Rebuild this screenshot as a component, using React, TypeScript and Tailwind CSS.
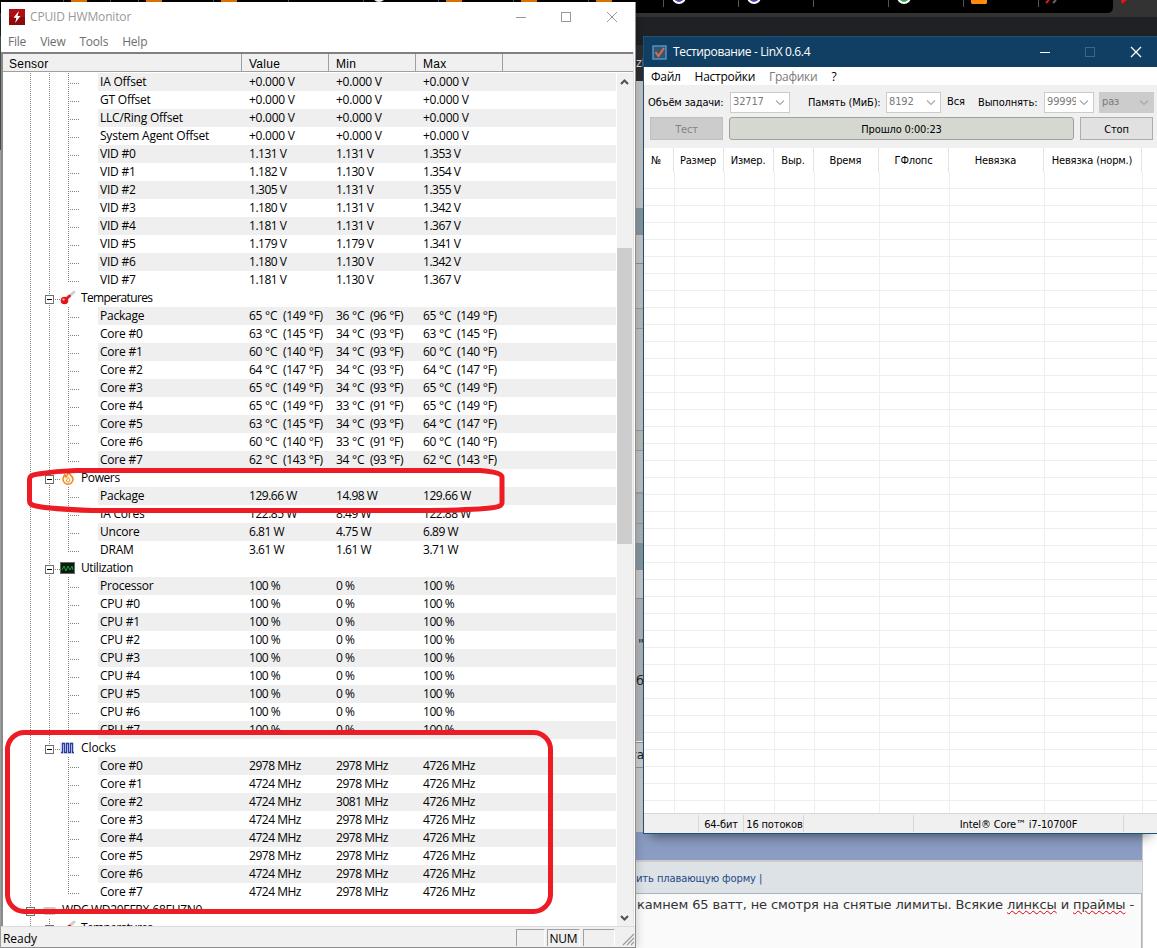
import { clsx } from "clsx";

type Row = [name: string, value: string, min: string, max: string];
type IconKind = "temp" | "power" | "util" | "clock" | "disk";
type Group = { title: string; icon: IconKind; rows: Row[] };

const VOLTAGES: Row[] = [
  ["IA Offset", "+0.000 V", "+0.000 V", "+0.000 V"],
  ["GT Offset", "+0.000 V", "+0.000 V", "+0.000 V"],
  ["LLC/Ring Offset", "+0.000 V", "+0.000 V", "+0.000 V"],
  ["System Agent Offset", "+0.000 V", "+0.000 V", "+0.000 V"],
  ["VID #0", "1.131 V", "1.131 V", "1.353 V"],
  ["VID #1", "1.182 V", "1.130 V", "1.354 V"],
  ["VID #2", "1.305 V", "1.131 V", "1.355 V"],
  ["VID #3", "1.180 V", "1.131 V", "1.342 V"],
  ["VID #4", "1.181 V", "1.131 V", "1.367 V"],
  ["VID #5", "1.179 V", "1.179 V", "1.341 V"],
  ["VID #6", "1.180 V", "1.130 V", "1.342 V"],
  ["VID #7", "1.181 V", "1.130 V", "1.367 V"],
];

const GROUPS: Group[] = [
  {
    title: "Temperatures",
    icon: "temp",
    rows: [
      ["Package", "65 °C  (149 °F)", "36 °C  (96 °F)", "65 °C  (149 °F)"],
      ["Core #0", "63 °C  (145 °F)", "34 °C  (93 °F)", "63 °C  (145 °F)"],
      ["Core #1", "60 °C  (140 °F)", "34 °C  (93 °F)", "60 °C  (140 °F)"],
      ["Core #2", "64 °C  (147 °F)", "34 °C  (93 °F)", "64 °C  (147 °F)"],
      ["Core #3", "65 °C  (149 °F)", "34 °C  (93 °F)", "65 °C  (149 °F)"],
      ["Core #4", "65 °C  (149 °F)", "33 °C  (91 °F)", "65 °C  (149 °F)"],
      ["Core #5", "63 °C  (145 °F)", "34 °C  (93 °F)", "64 °C  (147 °F)"],
      ["Core #6", "60 °C  (140 °F)", "33 °C  (91 °F)", "60 °C  (140 °F)"],
      ["Core #7", "62 °C  (143 °F)", "34 °C  (93 °F)", "62 °C  (143 °F)"],
    ],
  },
  {
    title: "Powers",
    icon: "power",
    rows: [
      ["Package", "129.66 W", "14.98 W", "129.66 W"],
      ["IA Cores", "122.85 W", "8.49 W", "122.88 W"],
      ["Uncore", "6.81 W", "4.75 W", "6.89 W"],
      ["DRAM", "3.61 W", "1.61 W", "3.71 W"],
    ],
  },
  {
    title: "Utilization",
    icon: "util",
    rows: [
      ["Processor", "100 %", "0 %", "100 %"],
      ["CPU #0", "100 %", "0 %", "100 %"],
      ["CPU #1", "100 %", "0 %", "100 %"],
      ["CPU #2", "100 %", "0 %", "100 %"],
      ["CPU #3", "100 %", "0 %", "100 %"],
      ["CPU #4", "100 %", "0 %", "100 %"],
      ["CPU #5", "100 %", "0 %", "100 %"],
      ["CPU #6", "100 %", "0 %", "100 %"],
      ["CPU #7", "100 %", "0 %", "100 %"],
    ],
  },
  {
    title: "Clocks",
    icon: "clock",
    rows: [
      ["Core #0", "2978 MHz", "2978 MHz", "4726 MHz"],
      ["Core #1", "4724 MHz", "2978 MHz", "4726 MHz"],
      ["Core #2", "4724 MHz", "3081 MHz", "4726 MHz"],
      ["Core #3", "4724 MHz", "2978 MHz", "4726 MHz"],
      ["Core #4", "4724 MHz", "2978 MHz", "4726 MHz"],
      ["Core #5", "2978 MHz", "2978 MHz", "4726 MHz"],
      ["Core #6", "4724 MHz", "2978 MHz", "4726 MHz"],
      ["Core #7", "4724 MHz", "2978 MHz", "4726 MHz"],
    ],
  },
];

// Dotted connector, one pixel on, one pixel off
function Dots({ d }: { d: string }) {
  return <path d={d} fill="none" stroke="#808080" strokeDasharray="1 1" />;
}

function Minus({ x }: { x: number }) {
  return (
    <>
      <rect x={x - 4} y="6.5" width="8" height="8" fill="#fff" stroke="#6e6e6e" />
      <path d={`M${x - 2.5} 10.5h5`} stroke="#000" />
    </>
  );
}

function NodeIcon({ kind }: { kind: IconKind }) {
  switch (kind) {
    case "temp":
      return (
        <g>
          <path d="M8 8.500L14 3" stroke="#cfcfcf" strokeWidth="3" strokeLinecap="round" />
          <path d="M5 11L9.500 7" stroke="#ea1c24" strokeWidth="3" strokeLinecap="round" />
          <circle cx="4.5" cy="11.5" r="3.8" fill="#e3131c" />
          <circle cx="3.5" cy="10.5" r="1.2" fill="#ff9a9a" />
        </g>
      );
    case "power":
      return (
        <g fill="none" stroke="#f08a1d">
          <path d="M8 2.5C8.5 5 13 6.5 13 10.3A5 5 0 0 1 3 10.3C3 8 4 7 4.7 5.8L6 8C7.5 6 8 4.500 8 2.5Z" fill="#fff3df" strokeWidth="1.5" />
          <path d="M8 8.5C9.5 10 9.8 10.8 9.5 12A1.600 1.600 0 0 1 6.500 12C6.400 10.800 7.5 10 8 8.5Z" fill="#fff" />
        </g>
      );
    case "util":
      return (
        <g>
          <rect x="0.5" y="3.5" width="14" height="11" fill="#0c1a0f" stroke="#676d68" />
          <path d="M2 11l2-4 2 5 2-5 2 4 2-4 1 4" fill="none" stroke="#12a236" />
        </g>
      );
    case "clock":
      return (
        <g>
          <rect y="3" width="14" height="12" fill="#e8eaff" />
          <path d="M1 13.5h1.5v-9h2v9h2v-9h2v9h2v-9h2v9H14" fill="none" stroke="#2b3a9c" strokeWidth="1.3" />
        </g>
      );
    case "disk":
      return <rect x="1" y="6" width="13" height="8" rx="2" fill="#c9c9c9" />;
  }
}

function Reading({ text, className }: { text: string; className?: string }) {
  const wide = text.includes("°") || text.startsWith("+");
  return <span className={clsx(wide ? "tracking-[-0.27px]" : "tracking-[-0.48px]", className)}>{text}</span>;
}

function LeafRow({ row, odd, last, inner = true }: { row: Row; odd: boolean; last: boolean; inner?: boolean }) {
  return (
    <div className="flex h-[18px] shrink-0">
      <svg className="h-[18px] w-[95px] shrink-0">
        <Dots d="M27.5 0V18" />
        {inner && <Dots d="M46.5 0V18" />}
        <Dots d={last ? "M65.5 0V10" : "M65.5 0V18"} />
        <Dots d="M65 10.5H76" />
      </svg>
      <div className={clsx("flex min-w-0 flex-1 whitespace-pre pl-0.5 leading-[18px]", odd ? "bg-[#efefef]" : "bg-white")}>
        <span className="w-[149px] shrink-0">{row[0]}</span>
        <Reading text={row[1]} className="w-[87px] shrink-0" />
        <Reading text={row[2]} className="w-[87px] shrink-0" />
        <Reading text={row[3]} />
      </div>
    </div>
  );
}

function GroupRow({ title, icon, last }: { title: string; icon: IconKind; last?: boolean }) {
  return (
    <div className="flex h-[18px] shrink-0 leading-[18px]">
      <svg className="h-[18px] w-[78px] shrink-0">
        <Dots d="M27.5 0V18" />
        <Dots d={last ? "M46.5 0V8" : "M46.5 0V18"} />
        <Dots d="M52 10.5H58" />
        <Minus x={46.5} />
        <g transform="translate(57 0)">
          <NodeIcon kind={icon} />
        </g>
      </svg>
      <span className={clsx(icon === "clock" ? "tracking-[-0.1px]" : icon === "temp" ? "tracking-[-0.65px]" : "tracking-[-0.4px]")}>{title}</span>
    </div>
  );
}

function SensorTree() {
  return (
    <div className="flex min-w-0 flex-1 flex-col overflow-hidden">
      {VOLTAGES.map((row, i) => (
        <LeafRow key={row[0]} row={row} odd={i % 2 === 0} last={i === VOLTAGES.length - 1} />
      ))}
      {GROUPS.map((g) => {
        const lastGroup = g.title === "Clocks";
        return (
          <div key={g.title} className="flex flex-col">
            <GroupRow title={g.title} icon={g.icon} last={lastGroup} />
            {g.rows.map((row, i) => (
              <LeafRow key={row[0]} row={row} odd={i % 2 === 0} last={i === g.rows.length - 1} inner={!lastGroup} />
            ))}
          </div>
        );
      })}
      <div className="flex h-[18px] shrink-0 leading-[18px]">
        <svg className="h-[18px] w-[59px] shrink-0">
          <Dots d="M27.5 0V18" />
          <Minus x={27.5} />
          <g transform="translate(39 0)">
            <NodeIcon kind="disk" />
          </g>
        </svg>
        <span className="tracking-[-0.35px]">WDC WD20EFRX-68EUZN0</span>
      </div>
      <GroupRow title="Temperatures" icon="temp" />
    </div>
  );
}

function HeaderCell({ label, className }: { label: string; className: string }) {
  return (
    <div className={clsx("flex h-full items-center border-r border-b border-[#a0a0a0] pt-0.5 text-[12px] tracking-[0.25px]", className)}>
      {label}
    </div>
  );
}

function HwMonitor() {
  return (
    <div className="absolute top-[2px] left-px flex h-[946px] w-[635px] flex-col border-r border-b border-[#8e8e8e] bg-white font-['Open_Sans','Noto_Sans',sans-serif] text-[12px] tracking-[-0.22px] text-black shadow-[2px_0_8px_rgba(0,0,0,0.15)]">
      <div className="flex h-[29px] shrink-0 items-center pl-2">
        <svg className="size-4" viewBox="0 0 16 16">
          <rect width="16" height="16" fill="#b00d10" />
          <path d="M0 8h16v8H0z" fill="#8e0709" />
          <path d="M9.8 2L4.5 8.8h2.8L6.2 14l5.3-7H8.6z" fill="#fff" />
        </svg>
        <span className="ml-[5px] tracking-[-0.15px] text-[#999]">CPUID HWMonitor</span>
        <svg className="mr-[17px] ml-auto h-3 w-[102px]" fill="none" stroke="#999" shapeRendering="crispEdges">
          <path d="M0 6.5h10" />
          <rect x="45.5" y="1.5" width="9" height="9" />
          <path d="M91 1l10 10M101 1L91 11" shapeRendering="auto" />
        </svg>
      </div>
      <div className="flex h-[21px] shrink-0 items-center gap-[14px] pl-[7px] text-[#6d6d6d]">
        <span>File</span>
        <span>View</span>
        <span>Tools</span>
        <span>Help</span>
      </div>
      <div className="mr-px flex min-h-0 flex-1 flex-col border-r border-[#e3e3e3]">
        <div className="flex min-h-0 flex-1 flex-col border-t-2 border-l-2 border-t-[#808080] border-l-[#8a8a8a]">
          <div className="flex h-[18px] shrink-0 bg-[#f0f0f0] font-['Liberation_Sans',Arial,sans-serif]">
            <HeaderCell label="Sensor" className="w-[239px] pl-[6px]" />
            <HeaderCell label="Value" className="w-[87px] pl-[7px]" />
            <HeaderCell label="Min" className="w-[87px] pl-[7px]" />
            <HeaderCell label="Max" className="w-[87px] pl-[7px]" />
            <HeaderCell label="" className="flex-1 border-r-0" />
          </div>
          <div className="mt-px flex min-h-0 flex-1">
            <SensorTree />
            <div className="ml-px flex w-4 shrink-0 flex-col items-start justify-between bg-[#f0f0f0]">
              <svg className="h-[17px] w-[15px]" fill="none" stroke="#505050" strokeWidth="2">
                <path d="M4 11l3.5-3.5L11 11" />
              </svg>
              <div className="mt-[158px] mb-auto h-[296px] w-[15px] bg-[#cdcdcd]" />
              <svg className="h-[17px] w-[15px]" fill="none" stroke="#505050" strokeWidth="2">
                <path d="M4 7l3.5 3.5L11 7" />
              </svg>
            </div>
          </div>
        </div>
      </div>
      <div className="flex h-[21px] shrink-0 items-center border-t border-[#dcdcdc] bg-[#f0f0f0] pl-0.5">
        <span className="pt-[3px] tracking-[-0.05px]">Ready</span>
        <div className="mt-px ml-auto h-[17px] w-[29px] border-t border-l border-[#a0a0a0] border-r border-r-white" />
        <div className="mt-px ml-0.5 h-[17px] w-[33px] border-t border-l border-[#a0a0a0] border-r border-r-white text-center leading-[17px]">NUM</div>
        <div className="mt-px ml-[3px] h-[17px] w-[32px] border-t border-l border-[#a0a0a0] border-r border-r-white" />
        <svg className="ml-[7px] h-[17px] w-[13px]" stroke="#9a9a9a" strokeWidth="1.2">
          <path d="M1 16L12 5M5 16l7-7M9 16l3-3" />
        </svg>
      </div>
    </div>
  );
}

function Combo({ value, className, disabled }: { value: string; className: string; disabled?: boolean }) {
  return (
    <div className={clsx("flex h-[21px] items-center border border-[#cccccc] pl-0.5 text-[#7a7a7a]", disabled ? "bg-[#cccccc]" : "bg-white", className)}>
      <span className="min-w-0 flex-1 overflow-hidden whitespace-nowrap">{value}</span>
      <svg className="mr-px h-[9px] w-4 shrink-0" fill="none" stroke="#a8a8a8" strokeWidth="1.2">
        <path d="M4 2.5l4 4 4-4" />
      </svg>
    </div>
  );
}

const COLUMNS: [string, string][] = [
  ["№", "w-[30px] pr-[5px]"],
  ["Размер", "w-[50px] pr-px"],
  ["Измер.", "w-[50px] pr-px"],
  ["Выр.", "w-[40px] pr-px"],
  ["Время", "w-[65px] pr-px"],
  ["ГФлопс", "w-[70px]"],
  ["Невязка", "w-[95px] pr-px"],
  ["Невязка (норм.)", "w-[98px] pr-px"],
];

function ResultGrid() {
  return (
    <div className="flex min-h-0 flex-1 flex-col bg-white">
      <div className="flex h-6 shrink-0">
        {COLUMNS.map(([label, cls]) => (
          <div key={label} className={clsx("flex shrink-0 items-center justify-center border-r border-[#e3e3e3] pt-0.5 whitespace-nowrap", cls)}>
            {label}
          </div>
        ))}
      </div>
      <div className="flex min-h-0 flex-1 flex-col overflow-hidden">
        {Array.from({ length: 38 }, (_, i) => (
          <div key={i} className="flex h-[17px] shrink-0 border-b border-[#efefef] pl-px">
            {COLUMNS.map(([label, cls]) => (
              <div key={label} className={clsx("shrink-0 border-r border-[#efefef]", cls)} />
            ))}
          </div>
        ))}
      </div>
    </div>
  );
}

function LinX() {
  return (
    <div className="absolute top-[36px] left-[643px] flex h-[798px] w-[514px] flex-col border-t border-b border-l border-[#1c5478] bg-[#f0f0f0] font-['DejaVu_Sans_Condensed','DejaVu_Sans',sans-serif] text-[11px] tracking-[-0.15px] text-black shadow-[0_9px_12px_-7px_rgba(0,0,0,0.5)]">
      <div className="flex h-[30px] shrink-0 items-center bg-[#113f63] pl-2 font-['Open_Sans','Noto_Sans',sans-serif] text-[12px] tracking-[-0.36px] text-white">
        <svg className="size-[15px]" viewBox="0 0 15 15" fill="none">
          <rect x="1" y="1" width="13" height="13" fill="#36566f" stroke="#4e9ad0" strokeWidth="1.4" />
          <path d="M3.5 7l3 4 5.5-8" stroke="#d9704a" strokeWidth="2" />
        </svg>
        <span className="ml-1.5">Тестирование - LinX 0.6.4</span>
        <svg className="mr-[15px] ml-auto h-3 w-[102px]" fill="none" stroke="#fff">
          <path d="M0 6.5h10" />
          <rect x="45.5" y="1.5" width="9" height="9" stroke="#406580" />
          <path d="M91 1l10 10M101 1L91 11" strokeWidth="1.3" />
        </svg>
      </div>
      <div className="flex h-[18px] shrink-0 items-center gap-[14px] bg-white pt-px pl-[7px] font-['Open_Sans','Noto_Sans',sans-serif] text-[12px] tracking-[-0.28px]">
        <span>Файл</span>
        <span>Настройки</span>
        <span className="text-[#7a7a7a]">Графики</span>
        <span>?</span>
      </div>
      <div className="flex h-[63px] shrink-0 flex-col">
        <div className="flex h-8 items-center whitespace-nowrap pt-[3px] pl-1">
          <span className="w-[82px] pt-px">Объём задачи:</span>
          <Combo value="32717" className="w-[60px]" />
          <span className="ml-[18px] w-[78px] pt-px">Память (МиБ):</span>
          <Combo value="8192" className="w-[55px]" />
          <span className="ml-1.5 w-[31px]">Вся</span>
          <span className="w-[66px] pt-px">Выполнять:</span>
          <Combo value="99999" className="w-[50px]" />
          <Combo value="раз" className="ml-[5px] w-[55px]" disabled />
        </div>
        <div className="flex pl-[6px] text-center leading-[23px]">
          <div className="h-[23px] w-[73px] border border-[#bfbfbf] bg-[#cccccc] text-[#838383]">Тест</div>
          <div className="ml-[6px] h-[23px] w-[345px] rounded-[3px] border border-[#a0a0a0] bg-[#d4d8d0]">Прошло 0:00:23</div>
          <div className="ml-[6px] h-[23px] w-[73px] border border-[#adadad] bg-[#e1e1e1]">Стоп</div>
        </div>
      </div>
      <ResultGrid />
      <div className="flex h-5 shrink-0 border-t border-[#d7d7d7] py-px text-center leading-[19px] whitespace-nowrap">
        <div className="w-[55px] border-r border-[#d7d7d7]" />
        <div className="w-[45px] border-r border-[#d7d7d7]">64-бит</div>
        <div className="w-[60px] border-r border-[#d7d7d7] pl-0.5">16 потоков</div>
        <div className="w-[110px] border-r border-[#d7d7d7]" />
        <div className="w-[210px] border-r border-[#d7d7d7]">Intel® Core™ i7-10700F</div>
      </div>
    </div>
  );
}

function BrowserTabs() {
  return (
    <div className="h-[36px] shrink-0 bg-[#202124]">
      <div className="h-[17px] bg-[#333]">
        <svg className="h-[13px] w-[1157px]">
          <path d="M0 0H1113V7Q1113 13 1107 13H0Z" fill="#000" />
          <path d="M63.5 0V2M110.5 0V2M138.5 0V2M213.5 0V2M288.5 0V2M363.5 0V2M438.5 0V2M513.5 0V2M588.5 0V2M663.5 0V7M738.5 0V7M813.5 0V7M888.5 0V7M963.5 0V7M1038.5 0V7" stroke="#555" />
          <path d="M71 0h16v2H71zM146 0h16v2h-16zM221 0h16v2h-16zM446 0h16v2h-16zM521 0h16v2h-16zM596 0h16v2h-16z" fill="#e67a00" />
          <path d="M971 0h16v3l-1 1h-14l-1-1z" fill="#ff8a0c" />
          <g stroke="#fff" strokeWidth="2">
            <circle cx="679" cy="-3" r="6" fill="#4444b4" />
            <circle cx="754" cy="-3" r="6" fill="#4444b4" />
            <circle cx="904" cy="-3" r="6" fill="#34a853" />
            <circle cx="379" cy="-5" r="6" fill="#34a853" />
          </g>
          <path d="M1046 3l3-3" stroke="#e01b1b" strokeWidth="2" />
          <path d="M1053 3l3-3" stroke="#666" strokeWidth="2" />
          <path d="M1121 0h6l-5 4z" fill="#f01010" />
        </svg>
      </div>
    </div>
  );
}

// Slices of the forum page that show in the gap between the two windows
const SLICES = [
  "h-[9px] bg-[#202124]",
  "h-[36px] bg-[#2d2e30]",
  "h-[127px] bg-[#c8c8c8]",
  "h-[27px] bg-[#8a98a1]",
  "h-[28px] bg-[#cbcbcb]",
  "h-[45px] border-t border-[#8e949a] bg-[#c6c6c6]",
  "h-[20px] border-t border-[#9aa0a8] bg-[#bfbfbc]",
  "h-[102px] border-t border-[#9aa0a8] bg-[#c6c6c6]",
  "h-[20px] border-t border-[#9aa0a8] bg-[#bfbfbc]",
  "h-[42px] border-t border-[#9aa0a8] bg-[#c6c6c6]",
  "h-[31px] border-t-2 border-[#a5a3a3] bg-[#b3b8bb]",
  "h-[20px] border-t border-[#9aa0a8] bg-[#b3b8bb]",
  "h-[27px] bg-[#8a98a1]",
  "h-[28px] bg-[#cdcdcd]",
];

function ForumPage() {
  return (
    <div className="flex min-h-0 flex-1 bg-white">
      <div className="flex w-[3px] shrink-0 flex-col">
        <div className="h-[114px] bg-[#45514a]" />
        <div className="flex-1 bg-[#a5a5a5]" />
      </div>
      <div className="flex w-[1139px] flex-col pl-[632px]">
        {SLICES.map((cls, i) => (
          <div key={i} className={clsx("w-[9px] shrink-0", cls)} />
        ))}
        <div className="flex h-[143px] w-[9px] shrink-0 flex-col items-end border-t border-[#8e98a2] bg-[#b4b8bc] font-['DejaVu_Sans',sans-serif] text-[13px] text-[#222]">
          <span className="mt-[35px] h-[37px]">"</span>
          <span>еб</span>
        </div>
        <div className="mt-px flex h-[26px] w-[9px] shrink-0 justify-end border-y border-[#8e98a2] bg-[#d2d2d2] pt-[3px] font-['DejaVu_Sans',sans-serif] text-[12px] text-[#222]">
          та
        </div>
        <div className="h-[64px] w-[9px] shrink-0 bg-[#cdcdcd]" />
        <div className="-ml-px h-[28px] shrink-0 bg-[#8b9dc3]" />
        <div className="h-[33px] shrink-0 border-t-2 border-[#cbcbcb] bg-[#dde2e6] pt-[9px] font-['DejaVu_Sans',Verdana,sans-serif] text-[10px] leading-[15px] text-[#1d4a85]">
          <span className="ml-px tracking-[-0.13px]">ить плавающую форму |</span>
        </div>
        <div className="min-h-0 flex-1 border-t border-r border-[#a9b4be] bg-[#fafafa] pt-px pl-0.5 font-['DejaVu_Sans',Verdana,sans-serif] text-[13px] tracking-[-0.13px] whitespace-nowrap text-[#333]">
          камнем 65 ватт, не смотря на снятые лимиты. Всякие{" "}
          <span className="underline decoration-red-600 decoration-wavy decoration-1">линксы</span> и{" "}
          <span className="underline decoration-red-600 decoration-wavy decoration-1">праймы</span> -
        </div>
      </div>
      <div className="w-px bg-[#cbcbcb]" />
    </div>
  );
}

export default function App() {
  return (
    <div className="relative flex h-[948px] w-[1157px] flex-col overflow-hidden">
      <BrowserTabs />
      <ForumPage />
      <div className="absolute top-[54px] left-[636px] font-['Liberation_Sans',sans-serif] text-[12px] text-[#ddd]">zl</div>
      <LinX />
      <HwMonitor />
      {/* hand-drawn red markers */}
      <svg className="pointer-events-none absolute inset-0 h-[948px] w-[1157px]" fill="none" stroke="#ed1c24" strokeWidth="5">
        <path d="M76 470.500H480Q502 472 502 477V503Q502 507 490 508Q470 510 430 510.500H92Q50 509 36 506Q29.500 505 29.500 501V479Q29.500 475 38 474Q56 471 76 470.500Z" />
        <rect x="7.5" y="732.500" width="543" height="179" rx="17" />
      </svg>
    </div>
  );
}
